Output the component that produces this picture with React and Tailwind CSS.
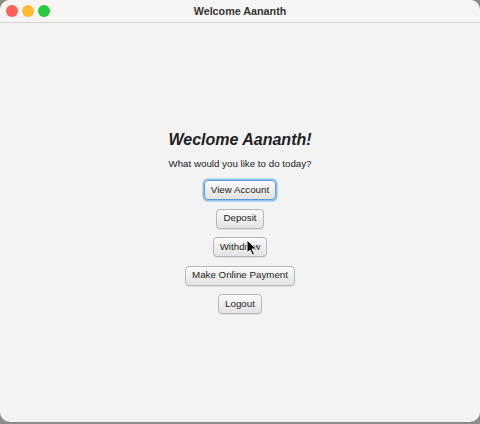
import React from 'react';

const buttons = ['View Account', 'Deposit', 'Withdraw', 'Make Online Payment', 'Logout'];

const App = () => {
  return (
    <div className="w-[480px] h-[424px] bg-[#8c8c8c] overflow-hidden" style={{ fontFamily: '"Liberation Sans", Arial, sans-serif' }}>
      <div className="relative w-[480px] h-[422px] rounded-[10px] overflow-hidden bg-[#f3f3f3] flex flex-col">
        {/* title bar */}
        <div className="h-[23px] shrink-0 bg-[#f6f5f4] border-b border-[#d6d6d6] flex items-center relative">
          <div className="flex items-center gap-[4px] pl-[6px]">
            <span className="w-[12px] h-[12px] rounded-full bg-[#fe5f57]"></span>
            <span className="w-[12px] h-[12px] rounded-full bg-[#febc2e]"></span>
            <span className="w-[12px] h-[12px] rounded-full bg-[#28c840]"></span>
          </div>
          <div className="absolute inset-0 flex items-center justify-center text-[10.75px] font-bold text-[#333]">
            Welcome Aananth
          </div>
        </div>

        {/* content */}
        <div className="flex-1 flex flex-col items-center justify-center pb-[2px] text-[#222]">
          <h1 className="h-[22px] leading-[22px] text-[16px] font-bold italic text-[#222]">Weclome Aananth!</h1>
          <p className="mt-[5px] h-[16px] leading-[16px] text-[9.75px] text-[#222]">What would you like to do today?</p>
          <div className="mt-[8px] flex flex-col items-center gap-[8.5px]">
            {buttons.map((b, i) => (
              <button
                key={b}
                className={`h-[20px] px-[6px] rounded-[4px] text-[9.75px] text-[#1e1e1e] bg-gradient-to-b from-[#fbfbfb] to-[#e3e3e3] border ${i === 0 ? 'border-[#5b9bd5] ring-[1.5px] ring-[#8fc0ea]' : 'border-[#b7b7b7]'} shadow-[0_1px_0_rgba(0,0,0,0.08)]`}
              >
                {b}
              </button>
            ))}
          </div>
        </div>

        {/* mouse cursor */}
        <svg className="absolute left-[246px] top-[239px]" width="12" height="17" viewBox="0 0 12 17">
          <path d="M1 1 L1 14 L4 11 L6.5 16 L8.5 15 L6 10 L10.5 10 Z" fill="#000" stroke="#fff" strokeWidth="1" strokeLinejoin="round" />
        </svg>
      </div>
    </div>
  );
};

export default App;
